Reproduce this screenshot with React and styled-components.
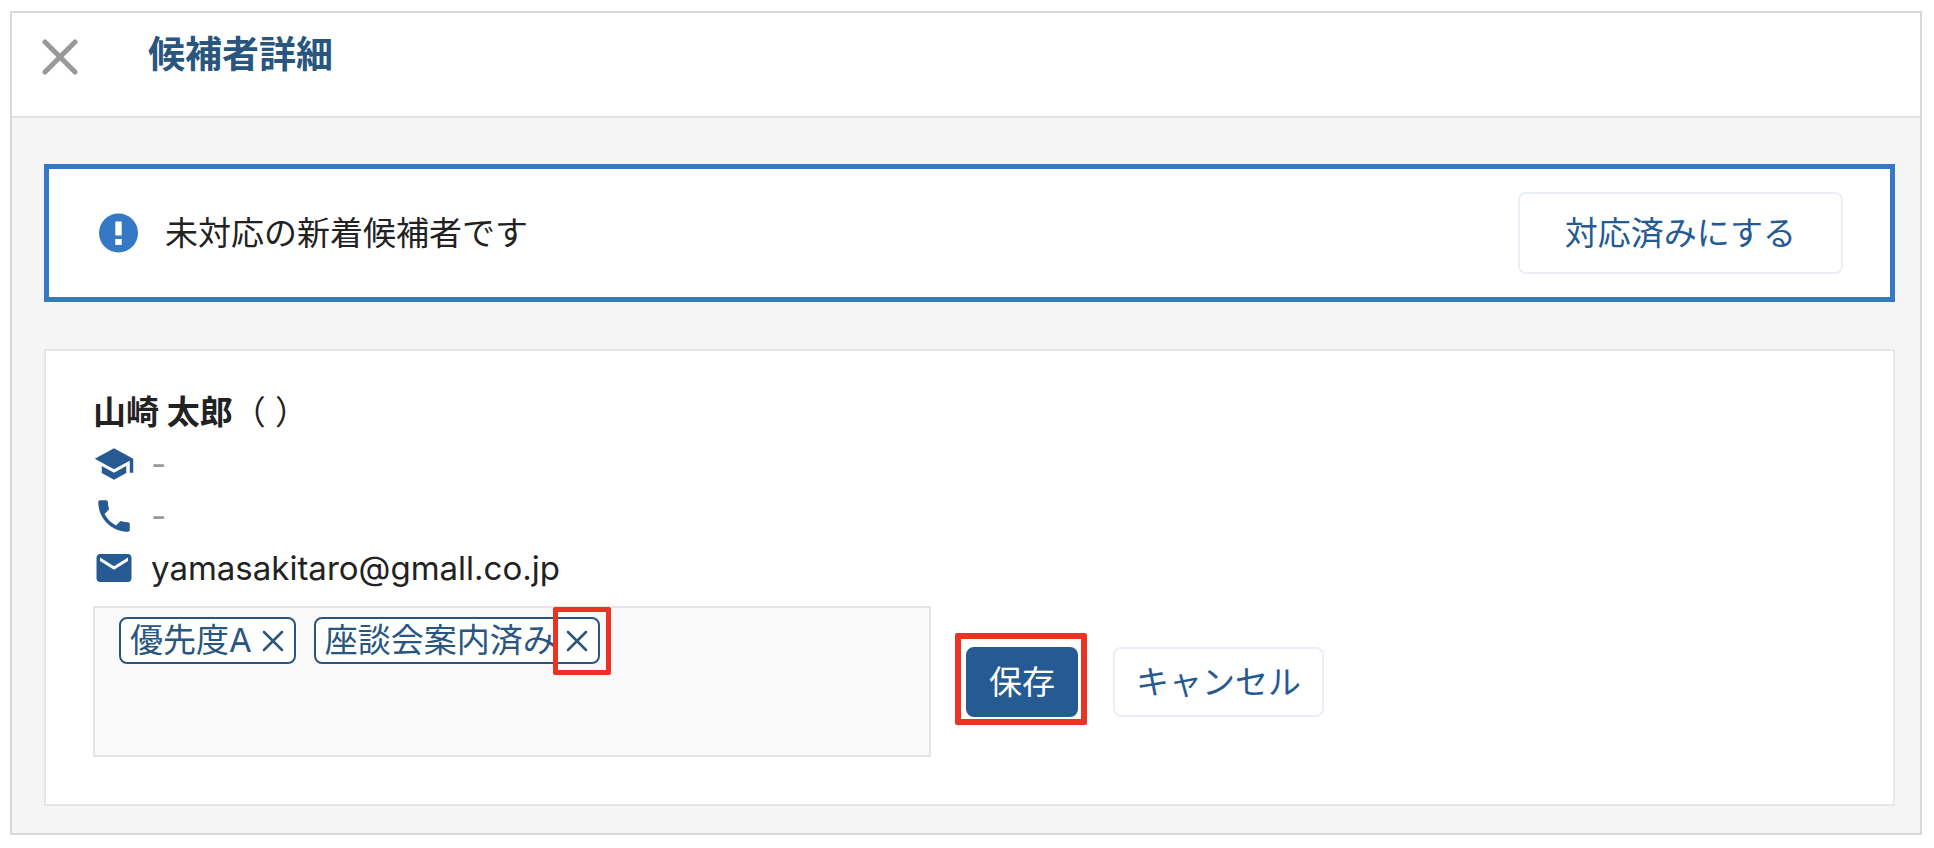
import React, {useState} from 'react';
import styled, {createGlobalStyle, css} from 'styled-components';
import {MdMail, MdPhone, MdSchool} from 'react-icons/md';

const GlobalStyle = createGlobalStyle`
    * {
        box-sizing: border-box;
    }
    body {
        margin: 0;
        background-color: #ffffff;
        font-family: Inter, "Noto Sans CJK JP", sans-serif;
        font-size: 33px;
        color: #222222;
    }
    button {
        font-family: inherit;
        cursor: pointer;
    }
`;

const Panel = styled.div`
    margin: 11px 12px 12px 10px;
    border: 2px solid #d9d9d9;
    background-color: #f5f5f5;
`;

const Header = styled.header`
    display: flex;
    align-items: flex-start;
    padding: 22px 30px 37px;
    border-bottom: 2px solid #e2e2e2;
    background-color: #ffffff;
`;

const CloseButton = styled.button`
    display: flex;
    align-items: center;
    justify-content: center;
    width: 36px;
    height: 44px;
    margin-right: 70px;
    padding: 0;
    border: none;
    background: none;
    color: #999999;
`;

const Title = styled.h1`
    margin: 0;
    font-size: 37px;
    font-weight: 700;
    line-height: 40px;
    color: #29567f;
`;

const Content = styled.main`
    display: flex;
    flex-direction: column;
    gap: 47px;
    padding: 46px 25px 27px 32px;
`;

const Notice = styled.section`
    display: flex;
    align-items: center;
    gap: 26px;
    padding: 23px 47px 23px 50px;
    border: 5px solid #3578c6;
    background-color: #ffffff;
    svg {
        flex: none;
    }
`;

const NoticeText = styled.p`
    flex: 1;
    margin: 0;
    line-height: 48px;
`;

const Button = styled.button`
    padding: ${({$wide}) => ($wide ? '15px 45px' : '9px 21px')};
    border: 2px solid ${({$primary}) => ($primary ? '#255a93' : '#eaeff7')};
    border-radius: 8px;
    background-color: ${({$primary}) => ($primary ? '#255a93' : '#ffffff')};
    color: ${({$primary}) => ($primary ? '#ffffff' : '#255a93')};
    font-size: 33px;
    line-height: 48px;
    white-space: nowrap;
`;

const Card = styled.section`
    padding: 35px 47px 47px;
    border: 2px solid #e6e6e6;
    background-color: #ffffff;
`;

const Name = styled.h2`
    margin: 0;
    font-size: 33px;
    font-weight: 700;
    line-height: 52px;
    span {
        font-weight: 400;
    }
`;

const InfoList = styled.ul`
    margin: 0 0 12px;
    padding: 0;
    list-style: none;
`;

const InfoRow = styled.li`
    display: flex;
    align-items: center;
    gap: 16px;
    height: 52px;
    color: ${({$empty}) => ($empty ? '#999999' : '#222222')};
    svg {
        color: #255a93;
    }
`;

const EditRow = styled.div`
    display: flex;
    align-items: center;
`;

const TagBox = styled.div`
    display: flex;
    flex: 0 1 838px;
    flex-wrap: wrap;
    align-content: flex-start;
    gap: 18px;
    min-height: 151px;
    margin-right: 35px;
    padding: 9px 24px;
    border: 2px solid #e5e5e5;
    background-color: #f9f9f9;
`;

const Tag = styled.span`
    display: flex;
    align-items: center;
    padding: 0 9px;
    border: 2px solid #29567f;
    border-radius: 8px;
    background-color: #ffffff;
    line-height: 43px;
    color: #29567f;
`;

const highlight = css`
    &::after {
        content: '';
        position: absolute;
        border: ${({$line}) => $line}px solid #eb3323;
        border-radius: 2px;
        inset: ${({$inset}) => $inset};
        pointer-events: none;
    }
`;

const TagRemove = styled.button`
    position: relative;
    display: flex;
    margin-left: 9px;
    padding: 0;
    border: none;
    background: none;
    color: inherit;
    ${({$marked}) => $marked && highlight}
`;

const SaveArea = styled.div`
    position: relative;
    margin-right: 35px;
    ${highlight}
`;

function Cross({size, stroke}) {
  return (
    <svg width={size} height={size} viewBox={`0 0 ${size} ${size}`} fill="none" aria-hidden="true">
      <path
        d={`M3 3L${size - 3} ${size - 3}M${size - 3} 3L3 ${size - 3}`}
        stroke="currentColor"
        strokeWidth={stroke}
        strokeLinecap="round"
      />
    </svg>
  );
}

function AlertIcon() {
  return (
    <svg width="40" height="40" viewBox="0 0 40 40" aria-hidden="true">
      <circle cx="19.5" cy="20" r="19.5" fill="#3578c6" />
      <path d="M16.3 8.5h6.4v14h-6.4zM16.3 26h6.4v6h-6.4z" fill="#ffffff" />
    </svg>
  );
}

function App() {
  const [tags, setTags] = useState(['優先度A', '座談会案内済み']);
  const onRemove = (tag) => {
      setTags(tags.filter((t) => t !== tag));
  }
  return (
    <>
      <GlobalStyle />
      <Panel>
        <Header>
          <CloseButton aria-label="閉じる">
            <Cross size={36} stroke={5} />
          </CloseButton>
          <Title>候補者詳細</Title>
        </Header>
        <Content>
          <Notice>
            <AlertIcon />
            <NoticeText>未対応の新着候補者です</NoticeText>
            <Button $wide>対応済みにする</Button>
          </Notice>
          <Card>
            <Name>山崎 太郎<span>（ ）</span></Name>
            <InfoList>
              <InfoRow $empty><MdSchool size={42} />-</InfoRow>
              <InfoRow $empty><MdPhone size={42} />-</InfoRow>
              <InfoRow><MdMail size={42} />yamasakitaro@gmall.co.jp</InfoRow>
            </InfoList>
            <EditRow>
              <TagBox>
                {tags.map((tag) => (
                  <Tag key={tag}>
                    {tag}
                    <TagRemove
                      aria-label={`${tag}を削除`}
                      $marked={tag === '座談会案内済み'}
                      $line={5}
                      $inset="-22px -22px -22px -12px"
                      onClick={() => onRemove(tag)}
                    >
                      <Cross size={24} stroke={2.5} />
                    </TagRemove>
                  </Tag>
                ))}
              </TagBox>
              <SaveArea $line={6} $inset="-14px -9px -8px -11px">
                <Button $primary>保存</Button>
              </SaveArea>
              <Button>キャンセル</Button>
            </EditRow>
          </Card>
        </Content>
      </Panel>
    </>
  );
}

export default App;
